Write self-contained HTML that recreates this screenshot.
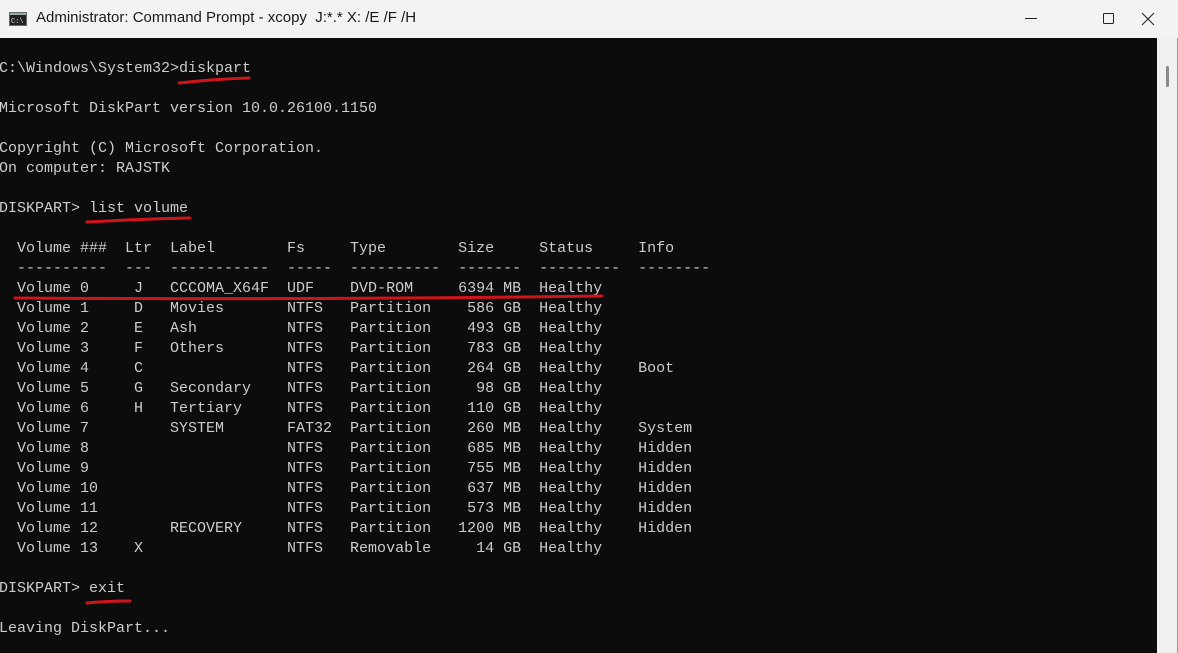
<!DOCTYPE html>
<html><head><style>
html,body{margin:0;padding:0;width:1178px;height:653px;overflow:hidden;background:#0c0c0c;}
#tb{position:absolute;left:0;top:0;width:1178px;height:38px;background:#f3f3f3;}
#tb .t{position:absolute;left:36px;top:9px;font:15px "Liberation Sans",sans-serif;color:#1a1a1a;}
#con{position:absolute;left:0;top:38px;width:1157px;height:615px;background:#0c0c0c;}
pre{position:absolute;left:-1px;top:59px;margin:0;font:15px/20px "Liberation Mono",monospace;color:#cccccc;}
#sb{position:absolute;left:1157px;top:38px;width:20px;height:615px;background:#f0f0f0;border-right:1px solid #999;}
#th{position:absolute;left:1166px;top:66px;width:3px;height:21px;background:#8a8a8a;border-radius:2px;}
</style></head><body>
<div id="tb">
<svg style="position:absolute;left:9px;top:12px" width="18" height="14"><rect x="0.5" y="0.5" width="17" height="13" fill="#222" stroke="#666"/><rect x="1" y="1" width="16" height="2" fill="#9aa"/><text x="2" y="11" font-size="7" fill="#ddd" font-family="Liberation Mono">C:\</text></svg>
<div class="t">Administrator: Command Prompt - xcopy &nbsp;J:*.* X: /E /F /H</div>
<svg style="position:absolute;left:1020px;top:9px" width="158" height="20"><line x1="5" y1="9.5" x2="17" y2="9.5" stroke="#222"/><rect x="83.5" y="4.5" width="10" height="10" fill="none" stroke="#222" rx="1"/><path d="M122 4 L134 16 M134 4 L122 16" stroke="#222"/></svg>
</div>
<div id="con"></div>
<pre>C:\Windows\System32&gt;diskpart

Microsoft DiskPart version 10.0.26100.1150

Copyright (C) Microsoft Corporation.
On computer: RAJSTK

DISKPART&gt; list volume

  Volume ###  Ltr  Label        Fs     Type        Size     Status     Info
  ----------  ---  -----------  -----  ----------  -------  ---------  --------
  Volume 0     J   CCCOMA_X64F  UDF    DVD-ROM     6394 MB  Healthy
  Volume 1     D   Movies       NTFS   Partition    586 GB  Healthy
  Volume 2     E   Ash          NTFS   Partition    493 GB  Healthy
  Volume 3     F   Others       NTFS   Partition    783 GB  Healthy
  Volume 4     C                NTFS   Partition    264 GB  Healthy    Boot
  Volume 5     G   Secondary    NTFS   Partition     98 GB  Healthy
  Volume 6     H   Tertiary     NTFS   Partition    110 GB  Healthy
  Volume 7         SYSTEM       FAT32  Partition    260 MB  Healthy    System
  Volume 8                      NTFS   Partition    685 MB  Healthy    Hidden
  Volume 9                      NTFS   Partition    755 MB  Healthy    Hidden
  Volume 10                     NTFS   Partition    637 MB  Healthy    Hidden
  Volume 11                     NTFS   Partition    573 MB  Healthy    Hidden
  Volume 12        RECOVERY     NTFS   Partition   1200 MB  Healthy    Hidden
  Volume 13    X                NTFS   Removable     14 GB  Healthy

DISKPART&gt; exit

Leaving DiskPart...</pre>
<svg style="position:absolute;left:0;top:0" width="1157" height="653">
<g fill="none" stroke="#d0141c" stroke-width="3" stroke-linecap="round">
<path d="M179 83 Q215 79 249 78"/>
<path d="M87 222 Q140 219 190 218"/>
<path d="M15 298 Q300 300 602 296"/>
<path d="M87 603 Q108 601 130 601"/>
</g></svg>
<div id="sb"></div><div id="th"></div>
</body></html>
